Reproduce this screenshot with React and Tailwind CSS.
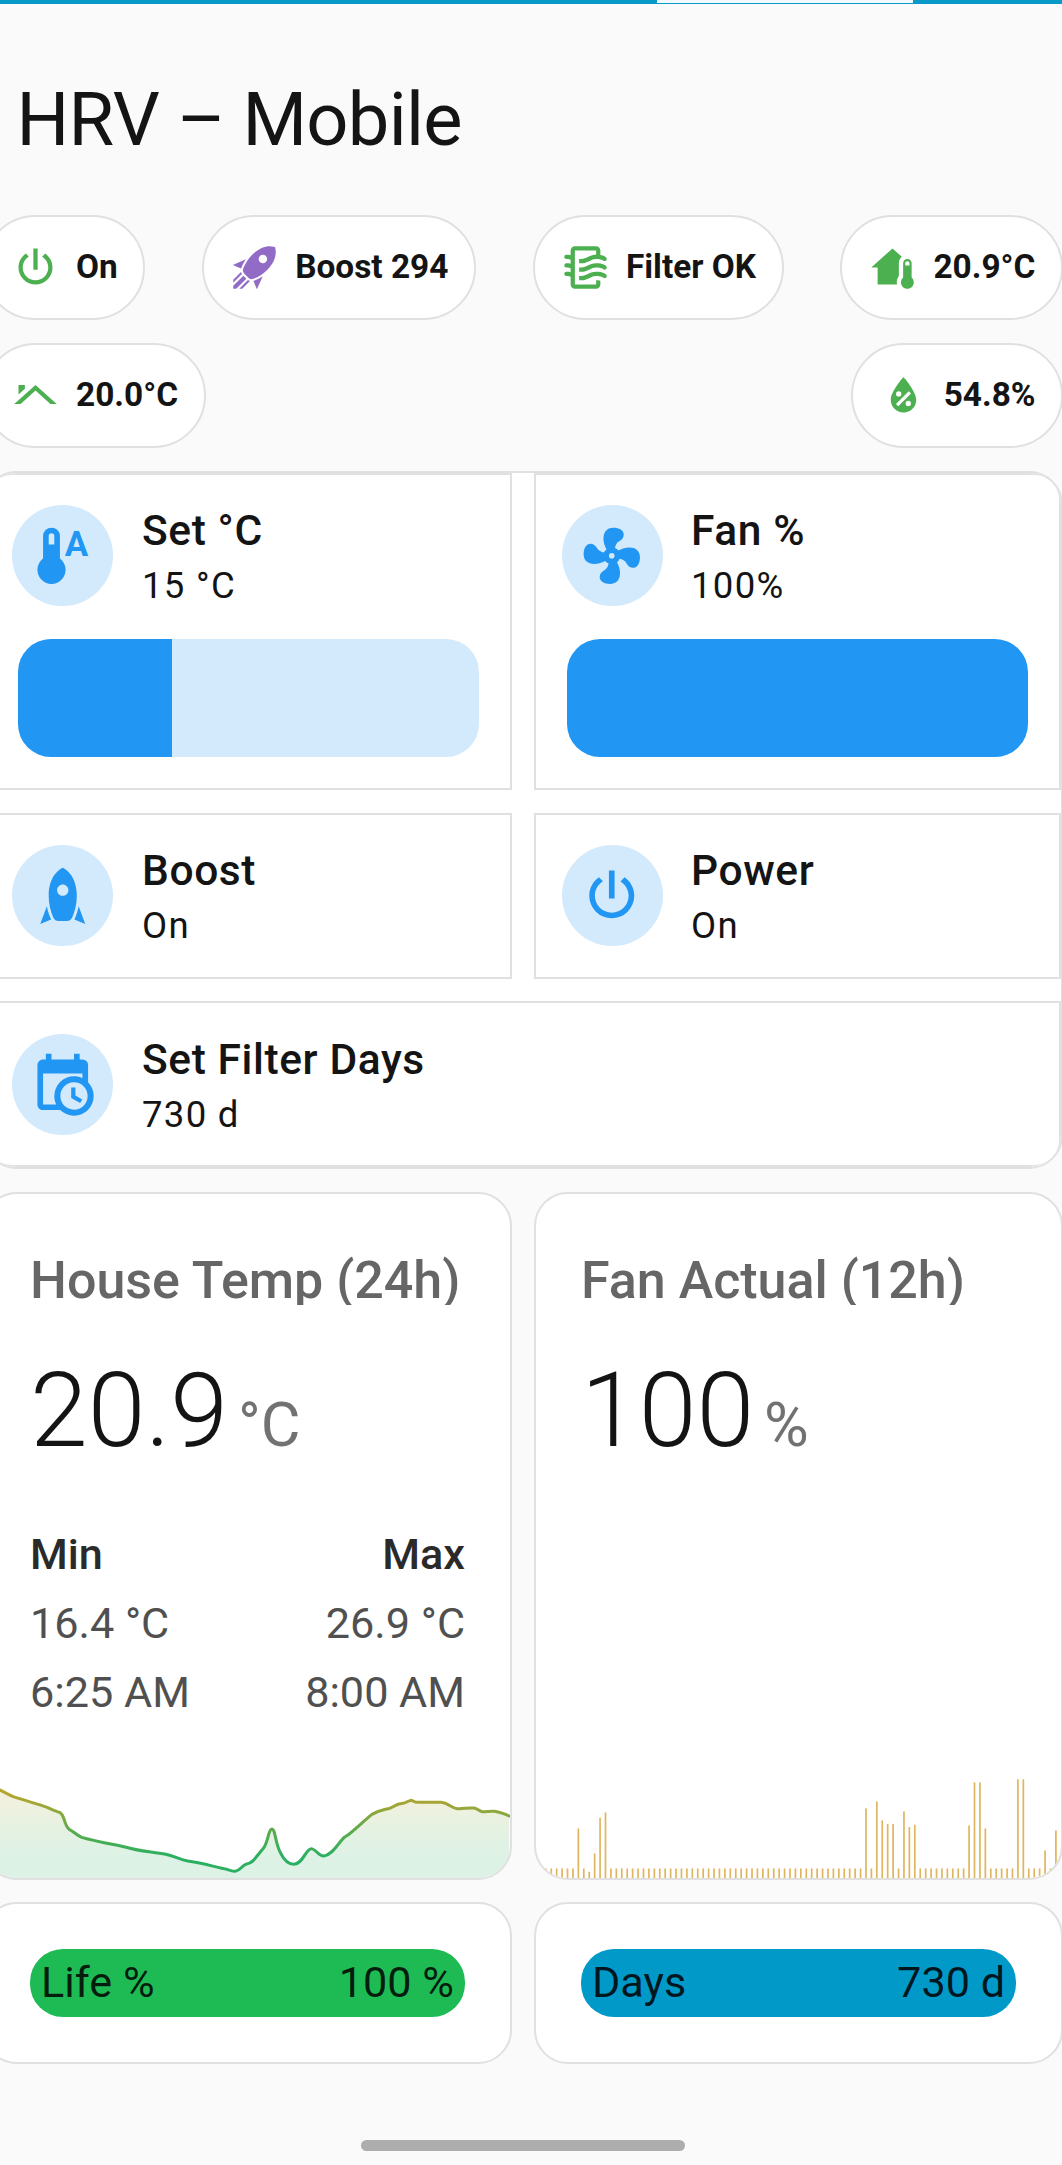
const P = {
  power: "M16.56,5.44L15.11,6.89C16.84,7.94 18,9.83 18,12A6,6 0 0,1 12,18A6,6 0 0,1 6,12C6,9.83 7.16,7.94 8.88,6.88L7.44,5.44C5.36,6.88 4,9.28 4,12A8,8 0 0,0 12,20A8,8 0 0,0 20,12C20,9.28 18.64,6.88 16.56,5.44M13,3H11V13H13",
  fan: "M12,11A1,1 0 0,0 11,12A1,1 0 0,0 12,13A1,1 0 0,0 13,12A1,1 0 0,0 12,11M12.5,2C17,2 17.11,5.57 14.75,6.75C13.76,7.24 13.32,8.29 13.13,9.22C13.61,9.42 14.03,9.73 14.35,10.13C18.05,8.13 22.03,8.92 22.03,12.5C22.03,17 18.46,17.1 17.28,14.73C16.78,13.74 15.72,13.3 14.79,13.11C14.59,13.59 14.28,14 13.88,14.34C15.87,18.03 15.08,22 11.5,22C7,22 6.91,18.42 9.27,17.24C10.25,16.75 10.69,15.71 10.89,14.79C10.4,14.59 9.97,14.27 9.65,13.87C5.96,15.85 2,15.07 2,11.5C2,7 5.56,6.89 6.74,9.26C7.24,10.25 8.29,10.68 9.22,10.87C9.41,10.39 9.73,9.97 10.14,9.65C8.15,5.96 8.94,2 12.5,2Z",
  rocket: "M20 22L16.14 20.45C16.84 18.92 17.34 17.34 17.65 15.73L20 22M7.86 20.45L4 22L6.35 15.73C6.66 17.34 7.16 18.92 7.86 20.45M12 2C12 2 17 4 17 12C17 15.1 16.25 17.75 15.33 19.83C15 20.55 14.29 21 13.5 21H10.5C9.71 21 9 20.55 8.67 19.83C7.76 17.75 7 15.1 7 12C7 4 12 2 12 2M12 12C13.1 12 14 11.1 14 10C14 8.9 13.1 8 12 8C10.9 8 10 8.9 10 10C10 11.1 10.9 12 12 12Z",
  launch: "M13.13 22.19L11.5 18.36C13.07 17.78 14.54 17 15.9 16.09L13.13 22.19M5.64 12.5L1.81 10.87L7.91 8.1C7 9.46 6.22 10.93 5.64 12.5M21.61 2.39C21.61 2.39 16.66 .269 11 5.93C8.81 8.12 7.5 10.53 6.65 12.64C6.37 13.39 6.56 14.21 7.11 14.77L9.24 16.89C9.79 17.45 10.61 17.63 11.36 17.35C13.5 16.53 15.88 15.19 18.07 13C23.73 7.34 21.61 2.39 21.61 2.39M14.54 9.46C13.76 8.68 13.76 7.41 14.54 6.63S16.59 5.85 17.37 6.63C18.14 7.41 18.15 8.68 17.37 9.46C16.59 10.24 15.32 10.24 14.54 9.46M6.24 22L9.88 18.36C9.54 18.27 9.21 18.12 8.91 17.91L4.83 22H6.24M2 22H3.41L8.18 17.24L6.76 15.83L2 20.59V22M2 19.17L6.09 15.09C5.88 14.79 5.73 14.47 5.64 14.12L2 17.76V19.17Z",
  homeTemp: "M19 8C20.11 8 21 8.9 21 10V16.76C21.61 17.31 22 18.11 22 19C22 20.66 20.66 22 19 22C17.34 22 16 20.66 16 19C16 18.11 16.39 17.31 17 16.76V10C17 8.9 17.9 8 19 8M19 9C18.45 9 18 9.45 18 10V11H20V10C20 9.45 19.55 9 19 9M12 3L16.4 6.96C15.54 7.69 15 8.78 15 10V16L14.8 16.3C14.29 17.08 14 18 14 19L14.12 20H5V12H2L12 3Z",
  roof: "M2 16L12 7L22 16H19L12 9.7L5 16ZM4 7H7V8.8L4 11.5Z",
  humidity: "M12,3.25C12,3.25 6,10 6,14C6,17.32 8.69,20 12,20A6,6 0 0,0 18,14C18,10 12,3.25 12,3.25M14.47,9.97L15.53,11.03L9.53,17.03L8.47,15.97M9.75,10A1.25,1.25 0 0,1 11,11.25A1.25,1.25 0 0,1 9.75,12.5A1.25,1.25 0 0,1 8.5,11.25A1.25,1.25 0 0,1 9.75,10M14.25,14.5A1.25,1.25 0 0,1 15.5,15.75A1.25,1.25 0 0,1 14.25,17A1.25,1.25 0 0,1 13,15.75A1.25,1.25 0 0,1 14.25,14.5Z",
  thermometer: "M11 13V5A3 3 0 0 0 5 5V13A5 5 0 1 0 11 13M8 4A1 1 0 0 1 9 5V8H7V5A1 1 0 0 1 8 4Z",
  calendar: "M15,13H16.5V15.82L18.94,17.23L18.19,18.53L15,16.69V13M19,8H5V19H9.67C9.24,18.09 9,17.07 9,16A7,7 0 0,1 16,9C17.07,9 18.09,9.24 19,9.67V8M5,21C3.89,21 3,20.1 3,19V5C3,3.89 3.89,3 5,3H6V1H8V3H16V1H18V3H19A2,2 0 0,1 21,5V11.1C22.24,12.36 23,14.09 23,16A7,7 0 0,1 16,23C14.09,23 12.36,22.24 11.1,21H5M16,11.15A4.85,4.85 0 0,0 11.15,16C11.15,18.68 13.32,20.85 16,20.85A4.85,4.85 0 0,0 20.85,16C20.85,13.32 18.68,11.15 16,11.15Z",
  filter: "M19,18.31V20A2,2 0 0,1 17,22H7A2,2 0 0,1 5,20V16.3C4.54,16.12 3.95,16 3,16A1,1 0 0,1 2,15A1,1 0 0,1 3,14C3.82,14 4.47,14.08 5,14.21V12.3C4.54,12.12 3.95,12 3,12A1,1 0 0,1 2,11A1,1 0 0,1 3,10C3.82,10 4.47,10.08 5,10.21V8.3C4.54,8.12 3.95,8 3,8A1,1 0 0,1 2,7A1,1 0 0,1 3,6C3.82,6 4.47,6.08 5,6.21V4A2,2 0 0,1 7,2H17A2,2 0 0,1 19,4V6.16C20.78,6.47 21.54,7.13 21.71,7.29C22.1,7.68 22.1,8.32 21.71,8.71C21.32,9.1 20.8,9.09 20.29,8.71C20.29,8.71 19.25,8 17,8C15.74,8 14.91,8.41 13.95,8.9C12.91,9.41 11.74,10 10,10C9.64,10 9.31,10 9,9.96V7.95C9.3,8 9.63,8 10,8C11.26,8 12.09,7.59 13.05,7.11C14.09,6.59 15.27,6 17,6V4H7V20H17V18C18.5,18 18.97,18.29 19,18.31M17,10C15.27,10 14.09,10.59 13.05,11.11C12.09,11.59 11.26,12 10,12C9.63,12 9.3,12 9,11.95V13.96C9.31,14 9.64,14 10,14C11.74,14 12.91,13.41 13.95,12.9C14.91,12.42 15.74,12 17,12C19.25,12 20.29,12.71 20.29,12.71C20.8,13.1 21.32,13.1 21.71,12.71C22.1,12.32 22.1,11.68 21.71,11.29C21.5,11.08 20.25,10 17,10M17,14C15.27,14 14.09,14.59 13.05,15.11C12.09,15.59 11.26,16 10,16C9.63,16 9.3,16 9,15.95V17.96C9.31,18 9.64,18 10,18C11.74,18 12.91,17.41 13.95,16.9C14.91,16.42 15.74,16 17,16C19.25,16 20.29,16.71 20.29,16.71C20.8,17.1 21.32,17.1 21.71,16.71C22.1,16.32 22.1,15.68 21.71,15.29C21.5,15.08 20.25,14 17,14Z",
};

function Icon({ name, className, children }) {
  return (
    <svg viewBox="0 0 24 24" fill="currentColor" className={className}>
      <path d={P[name]} fillRule={name === "launch" ? "evenodd" : undefined} />
      {children}
    </svg>
  );
}

function Badge({ icon, label, color = "text-[#4caf50]" }) {
  return (
    <div className="flex h-[105px] items-center gap-[15px] rounded-full border-2 border-[#e0e0e0] bg-white pr-[25.5px] pl-[25px]">
      <Icon name={icon} className={`size-[51px] shrink-0 ${color}`} />
      <span className="pb-[2px] text-[33.4px] leading-none font-bold whitespace-nowrap">{label}</span>
    </div>
  );
}

function Tile({ icon, name, state, className, level, extra, inset = "mt-[30px] ml-[25px] gap-[29px]" }) {
  return (
    <div className={`border-2 border-[#e0e0e0] bg-white ${className}`}>
      <div className={`flex h-[101px] items-center ${inset}`}>
        <div className="flex size-[101px] shrink-0 items-center justify-center rounded-full bg-[#d3e9fc] text-[#2196f3]">
          <Icon name={icon} className="size-[67.5px]">{extra}</Icon>
        </div>
        <div className="flex flex-col pt-[5px]">
          <span className="text-[42.5px] leading-[56px] font-medium tracking-[0.6px]">{name}</span>
          <span className="text-[36.5px] leading-[54px] tracking-[1.3px]">{state}</span>
        </div>
      </div>
      {level !== undefined && (
        <div className="mx-[31px] mt-[33px] h-[118px] overflow-hidden rounded-[33px] bg-[#d3e9fc]">
          <div className="h-full bg-[#2196f3]" style={{ width: `${level}%` }} />
        </div>
      )}
    </div>
  );
}

const TEMP_LINE =
  "M-46 246C-20 258 10 276 40 290C80 304 110 311 140 322C160 332 170 335 178 338C192 346 190 378 205 388C218 394 225 405 242 412C290 426 330 432 370 441C410 454 450 455 490 463C520 470 530 478 555 483C590 487 640 502 670 508C680 511 686 514 695 514C710 512 714 497 726 493C737 491 740 490 748 482C764 462 768 457 777 446C792 430 792 388 803 387C814 388 812 430 829 460C843 488 856 493 868 493C896 491 902 446 920 446C936 450 940 468 956 468C985 463 1000 425 1018 411C1032 403 1034 400 1045 390C1060 377 1080 358 1098 343C1115 334 1125 331 1138 328C1160 326 1165 315 1178 312C1200 310 1205 303 1212 301C1222 302 1220 307 1234 307H1302C1325 309 1332 325 1350 326C1370 327 1375 323 1400 324C1410 326 1414 334 1424 335C1440 335 1445 333 1460 334C1480 338 1490 341 1503 348";

const SPIKES = {
  0: 384, 2: 514, 3: 459, 4: 352, 5: 336, 53: 324, 55: 303, 56: 360, 57: 371, 58: 371,
  60: 333, 61: 380, 62: 373, 72: 375, 73: 246, 74: 246, 75: 384, 81: 237, 82: 237, 86: 450, 88: 390,
};

function TempChart() {
  return (
    <svg viewBox="-43.5 240 1549 294" preserveAspectRatio="none" className="block h-[98px] w-full">
      <defs>
        <linearGradient id="temp" gradientUnits="userSpaceOnUse" x1="0" y1="250" x2="0" y2="470">
          <stop offset="0" stopColor="#c5a52a" />
          <stop offset="0.3" stopColor="#a0a638" />
          <stop offset="0.65" stopColor="#5aab4c" />
          <stop offset="1" stopColor="#2bb061" />
        </linearGradient>
      </defs>
      <path d={`${TEMP_LINE}V540H-46Z`} fill="url(#temp)" opacity="0.16" />
      <path d={TEMP_LINE} fill="none" stroke="url(#temp)" strokeWidth="9" strokeLinejoin="round" strokeLinecap="round" />
    </svg>
  );
}

function FanChart() {
  return (
    <svg viewBox="16 230 1549 304" preserveAspectRatio="none" className="block h-[101.5px] w-full">
      {Array.from({ length: 97 }, (_, n) => n - 8).map((i) => {
        const top = SPIKES[i] ?? 504;
        return <rect key={i} x={138.5 + i * 16.011} y={top} width="5" height={540 - top} fill="#e0b55f" />;
      })}
    </svg>
  );
}

function GraphCard({ title, value, unit, children }) {
  return (
    <div className="flex h-[688px] flex-col overflow-hidden rounded-[34px] border-2 border-[#e0e0e0] bg-white">
      <div className="mx-[45px] mt-[59px] h-[52px] overflow-hidden text-[52px] leading-[56px] font-medium whitespace-nowrap text-[#666]">
        {title}
      </div>
      <div className="mx-[45px] mt-[46px] flex h-[120px] items-baseline gap-[10px]">
        <span className="text-[104px] leading-[120px] font-light">{value}</span>
        <span className="text-[61px] leading-none text-[#727272]">{unit}</span>
      </div>
      {children}
    </div>
  );
}

function Meter({ label, value, color }) {
  return (
    <div className="h-[162px] rounded-[34px] border-2 border-[#e0e0e0] bg-white px-[45px] pt-[45px]">
      <div className={`flex h-[68px] items-center justify-between rounded-[33px] px-[11px] text-[43.2px] text-black/85 ${color}`}>
        <span>{label}</span>
        <span>{value}</span>
      </div>
    </div>
  );
}

export default function App() {
  return (
    <div className="flex h-[2165px] w-[1062px] flex-col overflow-hidden bg-[#fafafa] font-[Roboto,sans-serif] text-[#141414]">
      <div className="h-1 shrink-0 bg-[#0899c8]">
        <div className="ml-[657px] h-[3px] w-[256px] bg-[#f2fbff]" />
      </div>
      <h1 className="mt-[72px] ml-[16.5px] h-[87px] text-[74px] leading-[88px] font-normal tracking-[-0.7px]">
        HRV – Mobile
      </h1>
      <div className="-mr-px -ml-[17px]">
        <div className="mt-[52px] flex justify-between">
          <Badge icon="power" label="On" />
          <Badge icon="launch" label="Boost 294" color="text-[#926bc7]" />
          <Badge icon="filter" label="Filter OK" />
          <Badge icon="homeTemp" label="20.9°C" />
        </div>
        <div className="mt-[23px] flex justify-between">
          <Badge icon="roof" label="20.0°C" />
          <Badge icon="humidity" label="54.8%" />
        </div>
        <div className="mt-[23px] overflow-hidden rounded-[34px] border-2 border-[#e0e0e0] bg-white">
          <div className="grid grid-cols-2 gap-x-[22px]">
            <Tile
              icon="thermometer"
              name="Set °C"
              state="15 °C"
              level={33.4}
              className="h-[317px] rounded-tl-[27px]"
              extra={<text x="12.7" y="12" fontSize="12.4" fontWeight="700" fontFamily="Roboto">A</text>}
            />
            <Tile
              icon="fan"
              name="Fan %"
              state="100%"
              level={100}
              className="h-[317px] rounded-tr-[27px]"
              inset="mt-[30px] ml-[25.5px] gap-[28.5px]"
            />
            <Tile icon="rocket" name="Boost" state="On" className="mt-[23px] h-[166px]" />
            <Tile
              icon="power"
              name="Power"
              state="On"
              className="mt-[23px] h-[166px]"
              inset="mt-[30px] ml-[25.5px] gap-[28.5px]"
            />
            <Tile
              icon="calendar"
              name="Set Filter Days"
              state="730 d"
              className="col-span-2 mt-[22px] h-[166px] rounded-b-[27px]"
              inset="mt-[31px] ml-[25px] gap-[29px]"
            />
          </div>
        </div>
        <div className="mt-[23px] grid grid-cols-2 gap-[22px]">
          <GraphCard title="House Temp (24h)" value="20.9" unit="°C">
            <div className="mx-[45px] mt-[49px] flex justify-between text-[43.2px] leading-[69px] text-[#505050]">
              <div>
                <div className="font-medium text-[#2a2a2a]">Min</div>
                <div>16.4 °C</div>
                <div>6:25 AM</div>
              </div>
              <div className="text-right">
                <div className="font-medium text-[#2a2a2a]">Max</div>
                <div>26.9 °C</div>
                <div>8:00 AM</div>
              </div>
            </div>
            <div className="mt-auto">
              <TempChart />
            </div>
          </GraphCard>
          <GraphCard title="Fan Actual (12h)" value="100" unit="%">
            <div className="mt-auto">
              <FanChart />
            </div>
          </GraphCard>
          <Meter label="Life %" value="100 %" color="bg-[#1eba54]" />
          <Meter label="Days" value="730 d" color="bg-[#0099c8]" />
        </div>
      </div>
      <div className="mt-[76px] ml-[361px] h-[11px] w-[324px] shrink-0 rounded-full bg-[#adadad]" />
    </div>
  );
}
